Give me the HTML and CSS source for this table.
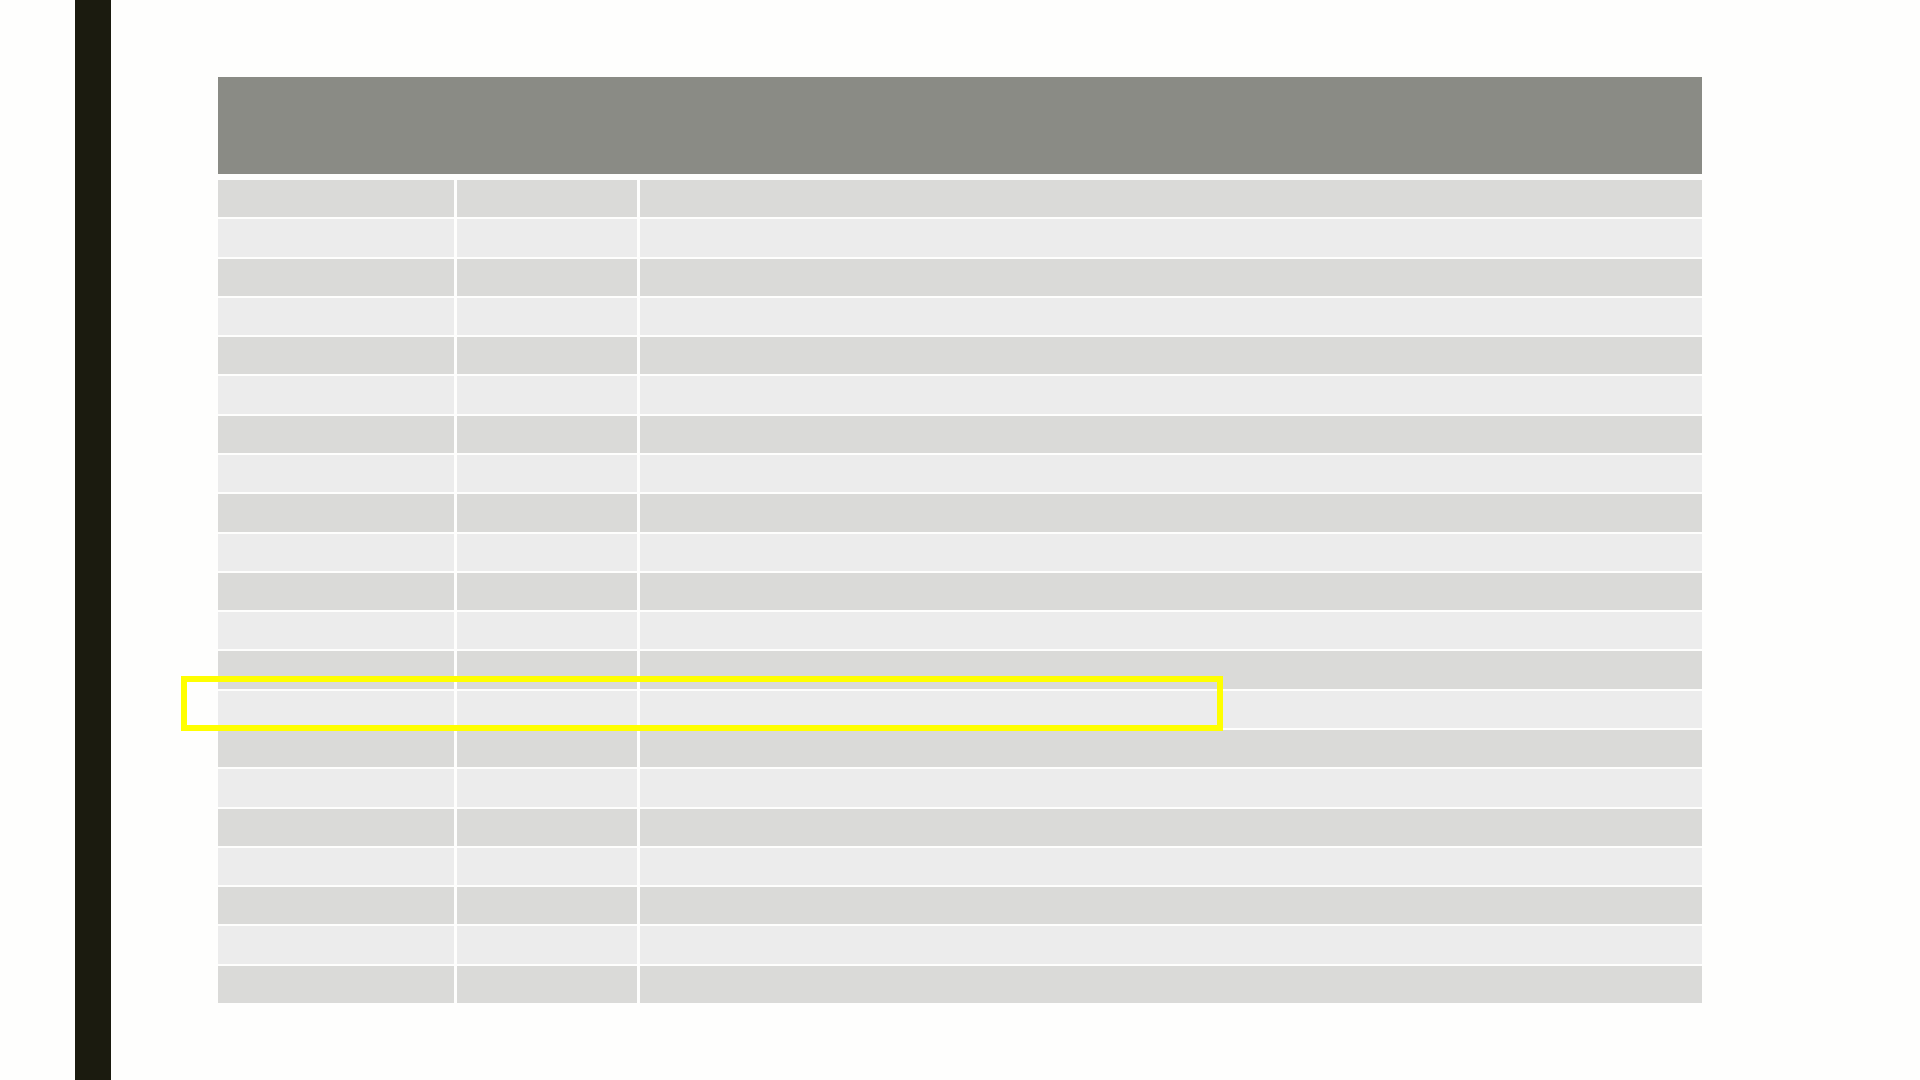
FILE: index.html
```html
<!DOCTYPE html>
<html lang="en">
<head>
<meta charset="utf-8">
<title>Table</title>
<link rel="stylesheet" href="styles.css">
</head>
<body>
<div class="page">
  <div class="side-bar"></div>
  <div class="sheet">
    <div class="table-head"></div>
    <div class="table-body">
      <div class="cell dark"></div><div class="cell dark"></div><div class="cell dark"></div>
      <div class="cell light"></div><div class="cell light"></div><div class="cell light"></div>
      <div class="cell dark"></div><div class="cell dark"></div><div class="cell dark"></div>
      <div class="cell light"></div><div class="cell light"></div><div class="cell light"></div>
      <div class="cell dark"></div><div class="cell dark"></div><div class="cell dark"></div>
      <div class="cell light"></div><div class="cell light"></div><div class="cell light"></div>
      <div class="cell dark"></div><div class="cell dark"></div><div class="cell dark"></div>
      <div class="cell light"></div><div class="cell light"></div><div class="cell light"></div>
      <div class="cell dark"></div><div class="cell dark"></div><div class="cell dark"></div>
      <div class="cell light"></div><div class="cell light"></div><div class="cell light"></div>
      <div class="cell dark"></div><div class="cell dark"></div><div class="cell dark"></div>
      <div class="cell light"></div><div class="cell light"></div><div class="cell light"></div>
      <div class="cell dark"></div><div class="cell dark"></div><div class="cell dark"></div>
      <div class="cell light"></div><div class="cell light"></div><div class="cell light"></div>
      <div class="cell dark"></div><div class="cell dark"></div><div class="cell dark"></div>
      <div class="cell light"></div><div class="cell light"></div><div class="cell light"></div>
      <div class="cell dark"></div><div class="cell dark"></div><div class="cell dark"></div>
      <div class="cell light"></div><div class="cell light"></div><div class="cell light"></div>
      <div class="cell dark"></div><div class="cell dark"></div><div class="cell dark"></div>
      <div class="cell light"></div><div class="cell light"></div><div class="cell light"></div>
      <div class="cell dark"></div><div class="cell dark"></div><div class="cell dark"></div>
    </div>
  </div>
  <div class="highlight"></div>
</div>
</body>
</html>
```
FILE: styles.css
```css
html, body {
  margin: 0;
  padding: 0;
  background: #fefefd;
  font-family: "Liberation Sans", Arial, sans-serif;
}

.page {
  position: relative;
  display: flex;
  width: 1920px;
  height: 1080px;
  overflow: hidden;
}

.side-bar {
  flex: 0 0 36px;
  margin-left: 75px;
  height: 1080px;
  background: #1b1b0f;
}

.sheet {
  margin-left: 107px;
  margin-top: 77px;
  width: 1484px;
  display: flex;
  flex-direction: column;
  gap: 6px;
}

.table-head {
  height: 97px;
  background: #8a8b85;
}

.table-body {
  display: grid;
  grid-template-columns: 236px 180px 1fr;
  grid-template-rows: repeat(21, 1fr);
  column-gap: 3px;
  row-gap: 2px;
  height: 823px;
}

.cell.dark {
  background: #dadad8;
}

.cell.light {
  background: #ececec;
}

.highlight {
  position: absolute;
  left: 181px;
  top: 676px;
  width: 1030px;
  height: 43px;
  border: 6px solid #ffff00;
}
```
